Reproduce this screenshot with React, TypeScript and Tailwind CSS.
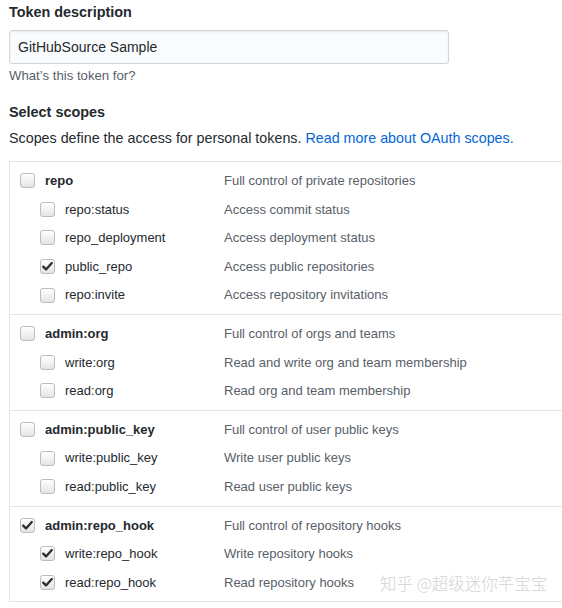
import React from 'react';

type Scope = { name: string; desc: string; checked?: boolean };
type Group = { parent: Scope; children: Scope[] };

const groups: Group[] = [
  {
    parent: { name: 'repo', desc: 'Full control of private repositories' },
    children: [
      { name: 'repo:status', desc: 'Access commit status' },
      { name: 'repo_deployment', desc: 'Access deployment status' },
      { name: 'public_repo', desc: 'Access public repositories', checked: true },
      { name: 'repo:invite', desc: 'Access repository invitations' },
    ],
  },
  {
    parent: { name: 'admin:org', desc: 'Full control of orgs and teams' },
    children: [
      { name: 'write:org', desc: 'Read and write org and team membership' },
      { name: 'read:org', desc: 'Read org and team membership' },
    ],
  },
  {
    parent: { name: 'admin:public_key', desc: 'Full control of user public keys' },
    children: [
      { name: 'write:public_key', desc: 'Write user public keys' },
      { name: 'read:public_key', desc: 'Read user public keys' },
    ],
  },
  {
    parent: { name: 'admin:repo_hook', desc: 'Full control of repository hooks', checked: true },
    children: [
      { name: 'write:repo_hook', desc: 'Write repository hooks', checked: true },
      { name: 'read:repo_hook', desc: 'Read repository hooks', checked: true },
    ],
  },
];

const Checkbox: React.FC<{ checked?: boolean }> = ({ checked }) => (
  <span className="flex h-[15px] w-[15px] shrink-0 items-center justify-center rounded-[3px] border border-[#bcbcbc] bg-gradient-to-b from-[#ffffff] to-[#e4e4e4] shadow-[inset_0_1px_0_#fff]">
    {checked && (
      <svg width="13" height="13" viewBox="0 0 13 13">
        <path d="M2.2 6.6 L5 9.4 L10.8 3" fill="none" stroke="#2d2d2d" strokeWidth="2.3" strokeLinecap="round" strokeLinejoin="round" />
      </svg>
    )}
  </span>
);

const Row: React.FC<{ scope: Scope; child?: boolean }> = ({ scope, child }) => (
  <div className="flex h-[28.6px] items-center">
    <div className={`flex w-[214px] shrink-0 items-center gap-[10px] ${child ? 'pl-[30px]' : 'pl-[10px]'}`}>
      <Checkbox checked={scope.checked} />
      <span className={child ? 'text-[#24292e]' : 'font-bold text-[#24292e]'}>{scope.name}</span>
    </div>
    <span className="text-[#586069]">{scope.desc}</span>
  </div>
);

export default function App() {
  return (
    <div className="relative h-[608px] w-[562px] overflow-hidden bg-white pl-[9px] pt-[2px] font-['Liberation_Sans',Arial,sans-serif] text-[#24292e]">
      <div className="text-[14.4px] font-bold leading-[21px]">Token description</div>
      <input
        defaultValue="GitHubSource Sample"
        className="mt-[7px] h-[34px] w-[440px] rounded-[3px] border border-[#d1d5da] bg-[#fafbfc] px-[8px] text-[14px] text-[#24292e] shadow-[inset_0_1px_2px_rgba(27,31,35,0.075)] outline-none"
      />
      <div className="mt-[3px] text-[13.2px] leading-[18px] text-[#586069]">What’s this token for?</div>
      <div className="mt-[17px] text-[14.4px] font-bold leading-[21px]">Select scopes</div>
      <p className="mt-[5px] text-[14.3px] leading-[21px]">
        Scopes define the access for personal tokens.{' '}
        <a className="text-[#0366d6]" href="#">Read more about OAuth scopes.</a>
      </p>
      <div className="mt-[12px] w-[570px] border border-[#e1e4e8] text-[13px]">
        {groups.map((g, i) => (
          <div key={g.parent.name} className={`py-[4.5px] ${i > 0 ? 'border-t border-[#e1e4e8]' : ''}`}>
            <Row scope={g.parent} />
            {g.children.map((c) => (
              <Row key={c.name} scope={c} child />
            ))}
          </div>
        ))}
      </div>
      <div className="absolute left-[380px] top-[571px] whitespace-nowrap font-['Noto_Sans_CJK_SC',sans-serif] text-[16.5px] font-light leading-[24px] text-[#d4d4d4]">
        知乎 @超级迷你芊宝宝
      </div>
    </div>
  );
}
